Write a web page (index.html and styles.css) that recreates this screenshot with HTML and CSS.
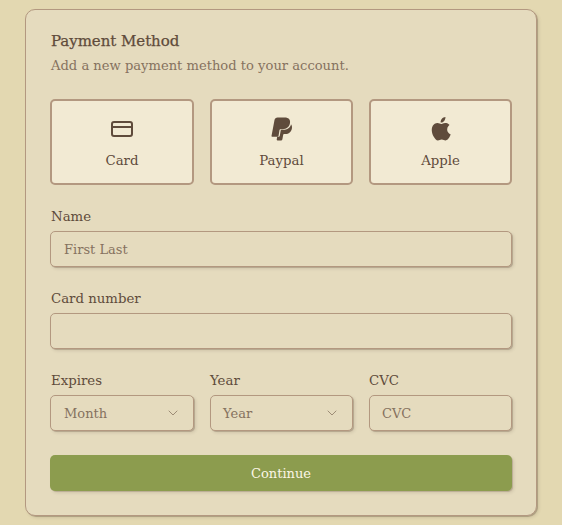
FILE: index.html
```html
<!DOCTYPE html>
<html lang="en">
<head>
    <meta charset="UTF-8">
    <meta name="viewport" content="width=device-width, initial-scale=1.0">
    <title>Payment Method</title>
    <link rel="stylesheet" href="styles.css">
</head>
<body>

<div class="card">
    <h2>Payment Method</h2>
    <p class="subtitle">Add a new payment method to your account.</p>

    <!-- payment type tiles -->
    <div class="methods">
        <button class="method" type="button">
            <svg class="icon" viewBox="0 0 24 24" fill="none" stroke="currentColor" stroke-width="2" stroke-linecap="round" stroke-linejoin="round">
                <rect x="2" y="5" width="20" height="14" rx="2"></rect>
                <path d="M2 10h20"></path>
            </svg>
            <span>Card</span>
        </button>
        <button class="method" type="button">
            <svg class="icon" viewBox="1 0 24 24" fill="currentColor">
                <path d="M8.500 0.500h7.300c3.700 0 5.800 2.100 5.200 5.600-.7 4-3.500 6.200-7.400 6.200h-2.200c-.5 0-.8.300-.9.800l-1 5.900c-.1.500-.4.700-.8.700H3.200c-.5 0-.8-.300-.7-.8L5.500 3c.3-1.600 1.500-2.500 3-2.500z"></path>
                <path d="M22 7.200c.9 1.100 1.200 2.500.9 4.200-.6 3.500-3.100 5.500-6.500 5.500h-1.300c-.5 0-.8.300-.9.800l-.8 4.600c-.1.700-.500 1.100-1.100 1.100H8.400c-.5 0-.8-.300-.7-.8l.5-2.900h1.600c.5 0 .9-.3 1-.9l.9-5.400c.1-.4.300-.6.700-.6h1.500c4.300 0 7.700-2.200 8.100-5.600z"></path>
            </svg>
            <span>Paypal</span>
        </button>
        <button class="method" type="button">
            <svg class="icon" viewBox="2 1.500 21 21" fill="currentColor">
                <path d="M17.900 12.400c0-2.500 2-3.700 2.100-3.800-1.200-1.700-3-1.900-3.600-1.900-1.500-.2-3 .9-3.700.9-.8 0-2-.9-3.300-.9-1.700 0-3.300 1-4.100 2.500-1.800 3.100-.5 7.700 1.300 10.200.8 1.200 1.800 2.600 3.200 2.600 1.300-.1 1.800-.8 3.300-.8 1.600 0 2 .8 3.400.8 1.400 0 2.300-1.300 3.200-2.500.9-1.400 1.300-2.700 1.300-2.800-.1 0-3.100-1.200-3.100-4.300z"></path>
                <path d="M15.300 4.900c.7-.9 1.200-2.100 1.100-3.400-1.100 0-2.400.7-3.100 1.600-.7.800-1.300 2-1.100 3.200 1.200.1 2.400-.6 3.100-1.400z"></path>
            </svg>
            <span>Apple</span>
        </button>
    </div>

    <div class="field">
        <label for="name">Name</label>
        <input id="name" type="text" placeholder="First Last">
    </div>

    <div class="field">
        <label for="number">Card number</label>
        <input id="number" type="text">
    </div>

    <div class="expiry">
        <div class="field">
            <label>Expires</label>
            <div class="select">
                <span>Month</span>
                <svg class="chevron" viewBox="0 0 24 24" fill="none" stroke="currentColor" stroke-width="1.500" stroke-linecap="round" stroke-linejoin="round"><path d="m6 9 6 6 6-6"></path></svg>
            </div>
        </div>
        <div class="field">
            <label>Year</label>
            <div class="select">
                <span>Year</span>
                <svg class="chevron" viewBox="0 0 24 24" fill="none" stroke="currentColor" stroke-width="1.500" stroke-linecap="round" stroke-linejoin="round"><path d="m6 9 6 6 6-6"></path></svg>
            </div>
        </div>
        <div class="field">
            <label for="cvc">CVC</label>
            <input id="cvc" type="text" placeholder="CVC">
        </div>
    </div>

    <button class="submit" type="button">Continue</button>
</div>

</body>
</html>
```

FILE: styles.css
```css
* {
    box-sizing: border-box;
}

body {
    margin: 0;
    padding: 9px 25px;
    background-color: #e3d8b1;
    color: #5f4b3b;
    font-family: "DejaVu Serif", "Liberation Serif", serif;
    font-size: 13px;
}

.card {
    height: 507px;
    padding: 24px;
    background-color: #e5dbbe;
    border: 1px solid #b39880;
    border-radius: 10px;
    box-shadow: 1px 1px 0 rgba(95, 75, 59, 0.3), 2px 2px 3px rgba(95, 75, 59, 0.15);
}

h2 {
    margin: 0;
    height: 14px;
    padding-left: 1px;
    line-height: 14px;
    font-size: 15px;
    font-weight: normal;
    letter-spacing: -0.05px;
    -webkit-text-stroke: 0.25px #5f4b3b;
}

.subtitle {
    margin: 10px 0 0;
    height: 16px;
    padding-left: 1px;
    line-height: 16px;
    color: #85725f;
    font-size: 13.1px;
}

.methods {
    display: grid;
    grid-template-columns: 144px 143px 143px;
    gap: 16px;
    margin-top: 25px;
    margin-bottom: 24px;
}

.method {
    display: flex;
    flex-direction: column;
    align-items: center;
    justify-content: center;
    gap: 12px;
    height: 86px;
    padding: 0;
    background-color: #f2ead3;
    border: 2px solid #b39880;
    border-radius: 5px;
    color: #5f4b3b;
    font-family: inherit;
    font-size: 13.3px;
}

.icon {
    width: 24px;
    height: 24px;
}

.field {
    display: flex;
    flex-direction: column;
    margin-bottom: 24px;
}

.field label {
    height: 16px;
    padding-left: 1px;
    line-height: 16px;
    margin-bottom: 6px;
    font-size: 13.3px;
}

input,
.select {
    width: 100%;
    height: 36px;
    padding: 0 13px;
    background-color: #e5dbbe;
    border: 1px solid #b39880;
    border-radius: 5px;
    box-shadow: 1px 1px 0 rgba(95, 75, 59, 0.25), 2px 2px 3px rgba(95, 75, 59, 0.15);
    color: #85725f;
    font-family: inherit;
    font-size: 13px;
}

input::placeholder {
    color: #85725f;
    opacity: 1;
}

.select {
    display: flex;
    align-items: center;
    justify-content: space-between;
    padding-right: 12px;
}

.chevron {
    width: 16px;
    height: 16px;
    opacity: 0.75;
}

.expiry {
    display: grid;
    grid-template-columns: 144px 143px 143px;
    gap: 16px;
}

/* second and third columns sit a pixel tighter */
.expiry .field + .field label {
    padding-left: 0;
}

.expiry .field + .field input,
.expiry .field + .field .select {
    padding-left: 12px;
}

.submit {
    display: block;
    width: 100%;
    height: 36px;
    background-color: #8c9c4e;
    border: none;
    border-radius: 5px;
    box-shadow: 1px 1px 0 rgba(95, 75, 59, 0.2), 2px 2px 3px rgba(95, 75, 59, 0.15);
    color: #fbf6e6;
    font-family: inherit;
    font-size: 13px;
}
```
